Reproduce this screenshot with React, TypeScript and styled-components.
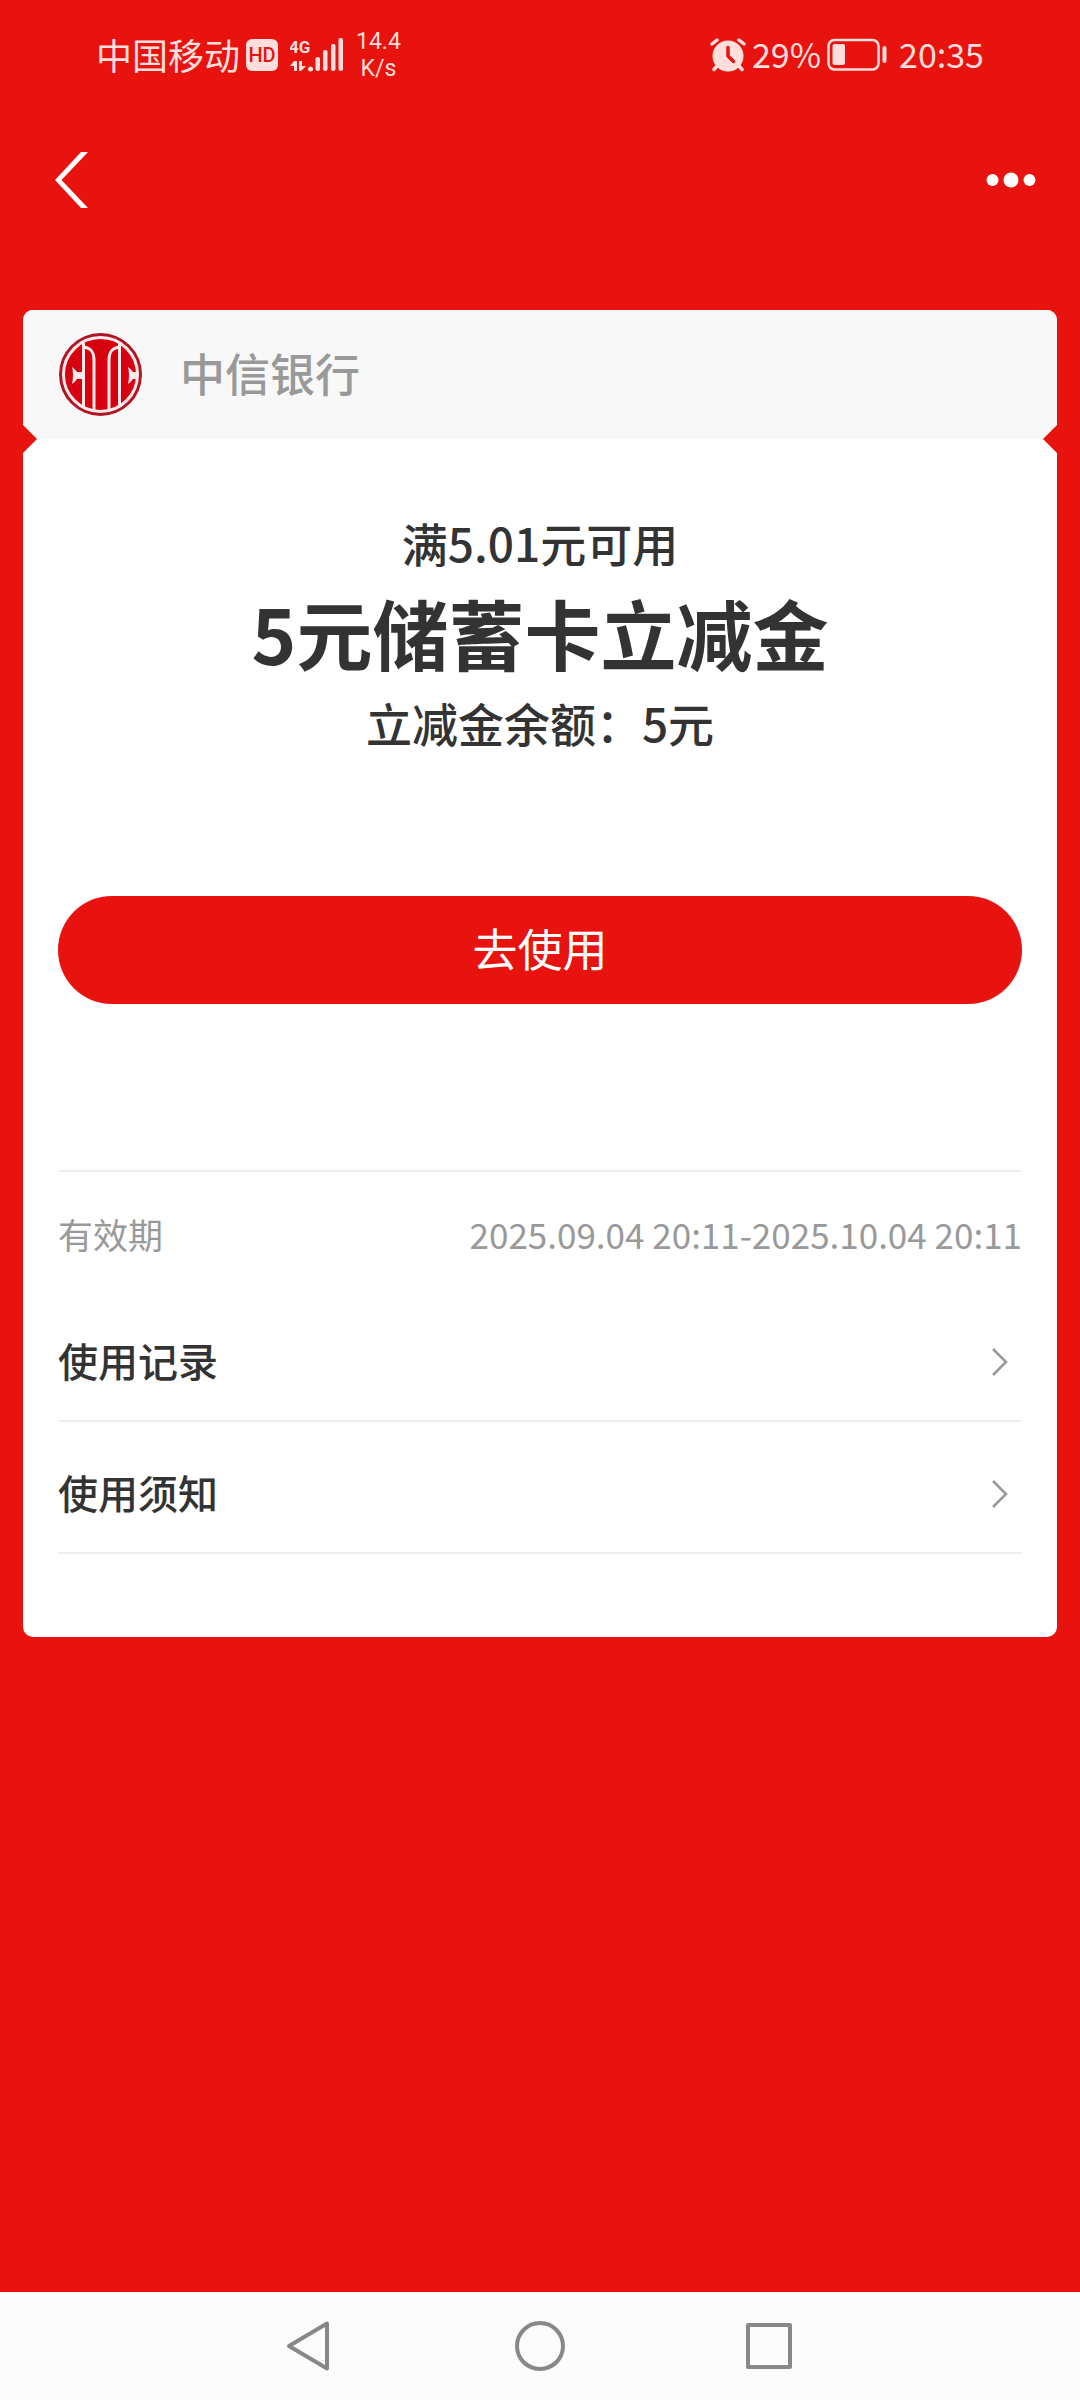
import React from "react";
import styled, { createGlobalStyle } from "styled-components";

const RED = "#e8120f";
const PALE = "#ffdedc";
const DARK = "#333333";
const GREY = "#999999";

const GlobalStyle = createGlobalStyle`
  *, *::before, *::after { box-sizing: border-box; }
  body {
    margin: 0;
    background: ${RED};
    font-family: "Noto Sans CJK SC", "Noto Sans", sans-serif;
    color: ${DARK};
  }
  button { font: inherit; color: inherit; border: 0; padding: 0; background: none; cursor: pointer; }
  svg { display: block; flex: none; }
`;

const Page = styled.div`
  display: flex;
  flex-direction: column;
  min-height: 100vh;
`;

const StatusBar = styled.header`
  display: flex;
  justify-content: space-between;
  align-items: center;
  height: 110px;
  padding: 0 96px;
  color: ${PALE};
`;

const StatusGroup = styled.div<{ $gap: number }>`
  display: flex;
  align-items: center;
  gap: ${({ $gap }) => $gap}px;
`;

const StatusText = styled.span<{ $size: number }>`
  padding-bottom: 2px;
  font-size: ${({ $size }) => $size}px;
  line-height: 40px;
`;

const HdBadge = styled.span`
  width: 32px;
  border-radius: 6px;
  background: ${PALE};
  color: ${RED};
  font: 500 20px/32px Roboto, sans-serif;
  text-align: center;
`;

const Speed = styled.span`
  display: flex;
  flex-direction: column;
  align-items: center;
  font: 400 23px/27px Roboto, sans-serif;
`;

const TitleBar = styled.nav`
  display: flex;
  justify-content: space-between;
  align-items: center;
  height: 140px;
  padding: 0 44px 0 54px;
`;

const IconButton = styled.button`
  display: flex;
  align-items: center;
  justify-content: center;
`;

const Card = styled.main`
  margin: 60px 23px;
  border-radius: 10px;
  overflow: hidden;
  background: #ffffff;
`;

const BankHeader = styled.div`
  display: flex;
  align-items: center;
  gap: 38px;
  height: 129px;
  padding: 0 36px;
  background: #f8f8f8;
`;

const BankName = styled.h2`
  margin: 0;
  padding-bottom: 4px;
  font-size: 45px;
  font-weight: 500;
  line-height: 60px;
  color: ${GREY};
`;

const CardBody = styled.div`
  position: relative;
  padding: 69px 35px 83px;

  &::before,
  &::after {
    content: "";
    position: absolute;
    top: -14px;
    border: 14px solid transparent;
  }
  &::before { left: 0; border-left-color: ${RED}; border-right-width: 0; }
  &::after { right: 0; border-right-color: ${RED}; border-left-width: 0; }
`;

const Offer = styled.section`
  display: flex;
  flex-direction: column;
  align-items: center;
  text-align: center;
`;

const OfferText = styled.p`
  margin: 0;
  font-size: 46px;
  font-weight: 500;
  line-height: 68px;
`;

const OfferTitle = styled.h1`
  margin: 0;
  font-size: 76px;
  font-weight: 700;
  line-height: 112px;
`;

const UseButton = styled.button`
  width: 100%;
  height: 108px;
  margin: 140px 0 166px;
  padding-bottom: 4px;
  border-radius: 54px;
  background: ${RED};
  color: #ffffff;
  font-size: 45px;
  line-height: 60px;
`;

const Validity = styled.div`
  display: flex;
  justify-content: space-between;
  align-items: center;
  height: 128px;
  padding-bottom: 2px;
  border-top: 2px solid #eeeeee;
  font-size: 35px;
  line-height: 48px;
  color: ${GREY};
`;

const Row = styled.a`
  display: flex;
  justify-content: space-between;
  align-items: center;
  height: 132px;
  padding: 14px 14px 0 0;
  border-bottom: 2px solid #eeeeee;
  color: ${DARK};
  font-size: 40px;
  font-weight: 500;
  line-height: 56px;
  text-decoration: none;

  &:first-of-type { height: 124px; padding-top: 6px; }
`;

const RowLabel = styled.span`
  padding-bottom: 4px;
`;

const SystemBar = styled.footer`
  display: flex;
  justify-content: center;
  align-items: center;
  gap: 178px;
  height: 108px;
  margin-top: auto;
  background: #fcfcfc;
`;

const SignalIcon = () => (
  <svg width="54" height="34" viewBox="0 0 54 34" fill={PALE} role="img" aria-label="4G">
    <text x="-1" y="15" fontFamily="Roboto, sans-serif" fontSize="17" fontWeight="700">4G</text>
    <path d="M4 23h3v10H4v-5H0zM9 23h3v5h4l-5 5H9z" />
    <circle cx="20.500" cy="31" r="2.500" />
    <rect x="25.500" y="19" width="4.500" height="14" rx="2" />
    <rect x="33" y="12" width="4.500" height="21" rx="2" />
    <rect x="41" y="6" width="4.500" height="27" rx="2" />
    <rect x="48.500" y="0" width="4.500" height="33" rx="2" />
  </svg>
);

const AlarmIcon = () => (
  <svg width="36" height="34" viewBox="0 0 36 34" fill="none" strokeLinecap="round">
    <g stroke={PALE} strokeWidth="3.500">
      <path d="M2 6L7 2M34 6L29 2M7 28L4 31.500M29 28l3 3.500" />
    </g>
    <circle cx="18" cy="18" r="15.500" fill={PALE} />
    <path d="M18 9.500V18l5.500 5.500" stroke={RED} strokeWidth="3.500" strokeLinejoin="round" />
  </svg>
);

const BatteryIcon = () => (
  <svg width="60" height="34" viewBox="0 0 60 34" fill="none">
    <rect x="1.500" y="2" width="50" height="29.500" rx="6" stroke={PALE} strokeWidth="2.500" />
    <rect x="5.500" y="6" width="12.500" height="21" rx="2" fill={PALE} />
    <rect x="55.500" y="8" width="4" height="17" rx="2" fill={PALE} />
  </svg>
);

const BackIcon = () => (
  <svg width="36" height="58" viewBox="0 0 36 58" fill="none">
    <path d="M27 1H34L7.500 29L34 57H27L1 29Z" fill="#fff" />
  </svg>
);

const MoreIcon = () => (
  <svg width="50" height="16" viewBox="0 0 50 16" fill="#fff">
    <circle cx="6.500" cy="8" r="6" />
    <circle cx="25" cy="8" r="7.500" />
    <circle cx="43.500" cy="8" r="6" />
  </svg>
);

const BankLogo = () => (
  <svg width="83" height="83" viewBox="0 0 83 83">
    <circle cx="41.500" cy="41.500" r="41.500" fill="#b01622" />
    <circle cx="41.500" cy="41.500" r="37" fill="#d7000f" stroke="#fdeaea" strokeWidth="3" />
    <g fill="none" stroke="#fdeaea" strokeWidth="3">
      <path d="M24.500 10V74M60.500 10V74" />
      <path d="M24.500 14C32 15 35 19 35 27V78M60.500 14C53 15 50 19 50 27V78" />
    </g>
    <path d="M13 34Q16 36 18 39H24V46H18Q16 49 13 51Q15 42 13 34ZM78 39H74Q72 36 69 34Q71 42 69 51Q72 49 74 46H78Z" fill="#fdeaea" />
  </svg>
);

const ChevronIcon = () => (
  <svg width="16" height="28" viewBox="0 0 16 28" fill="none" stroke={GREY} strokeWidth="2.500">
    <path d="M1 1L14 14L1 27" />
  </svg>
);

const SystemIcon = ({ d }: { d: string }) => (
  <svg width="52" height="52" viewBox="0 0 52 52" fill="none" stroke="#888" strokeWidth="4" strokeLinejoin="round">
    <path d={d} />
  </svg>
);

const systemKeys = [
  { label: "返回", d: "M43 3.500V48.500L5 26Z" },
  { label: "主屏幕", d: "M26 3A23 23 0 1 0 26 49A23 23 0 1 0 26 3Z" },
  { label: "最近任务", d: "M4 5H46V47H4Z" },
];

export default function App() {
  return (
    <Page>
      <GlobalStyle />
      <StatusBar>
        <StatusGroup $gap={12}>
          <StatusGroup $gap={6}>
            <StatusText $size={36}>中国移动</StatusText>
            <HdBadge>HD</HdBadge>
          </StatusGroup>
          <SignalIcon />
          <Speed>
            <span>14.4</span>
            <span>K/s</span>
          </Speed>
        </StatusGroup>
        <StatusGroup $gap={12}>
          <StatusGroup $gap={6}>
            <AlarmIcon />
            <StatusText $size={34}>29%</StatusText>
            <BatteryIcon />
          </StatusGroup>
          <StatusText $size={34}>20:35</StatusText>
        </StatusGroup>
      </StatusBar>
      <TitleBar>
        <IconButton aria-label="返回">
          <BackIcon />
        </IconButton>
        <IconButton aria-label="更多">
          <MoreIcon />
        </IconButton>
      </TitleBar>
      <Card>
        <BankHeader>
          <BankLogo />
          <BankName>中信银行</BankName>
        </BankHeader>
        <CardBody>
          <Offer>
            <OfferText>满5.01元可用</OfferText>
            <OfferTitle>5元储蓄卡立减金</OfferTitle>
            <OfferText>立减金余额：5元</OfferText>
          </Offer>
          <UseButton>去使用</UseButton>
          <Validity>
            <span>有效期</span>
            <span>2025.09.04 20:11-2025.10.04 20:11</span>
          </Validity>
          <Row href="#records">
            <RowLabel>使用记录</RowLabel>
            <ChevronIcon />
          </Row>
          <Row href="#notice">
            <RowLabel>使用须知</RowLabel>
            <ChevronIcon />
          </Row>
        </CardBody>
      </Card>
      <SystemBar>
        {systemKeys.map((key) => (
          <IconButton key={key.label} aria-label={key.label}>
            <SystemIcon d={key.d} />
          </IconButton>
        ))}
      </SystemBar>
    </Page>
  );
}
